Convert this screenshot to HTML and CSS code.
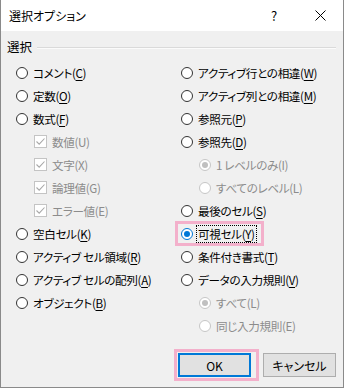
FILE: index.html
```html
<!DOCTYPE html>
<html lang="ja">
<head>
<meta charset="utf-8">
<title>選択オプション</title>
<link rel="stylesheet" href="styles.css">
</head>
<body>
<div class="window">
  <div class="titlebar">
    <span class="title">選択オプション</span>
    <span class="tb-btn help">?</span>
    <span class="tb-btn close"><svg width="11" height="11" viewBox="0 0 11 11"><path d="M0.5 0.5 L10.5 10.5 M10.5 0.5 L0.5 10.5" stroke="#000" stroke-width="1" fill="none"/></svg></span>
  </div>
  <div class="content">
    <div class="group-head"><span class="group-label">選択</span><span class="rule"></span></div>
    <div class="columns">
      <div class="col">
        <div class="opt"><span class="radio"></span><span class="lbl">コメント(<u>C</u>)</span></div>
        <div class="opt"><span class="radio"></span><span class="lbl">定数(<u>O</u>)</span></div>
        <div class="opt"><span class="radio"></span><span class="lbl">数式(<u>F</u>)</span></div>
        <div class="opt sub dis"><span class="check"><svg width="11" height="11" viewBox="0 0 11 11"><path d="M1.5 5.5 L4.2 8.2 L9.5 2.5" stroke="#a8a8a8" stroke-width="1.1" fill="none"/></svg></span><span class="lbl">数値(U)</span></div>
        <div class="opt sub dis"><span class="check"><svg width="11" height="11" viewBox="0 0 11 11"><path d="M1.5 5.5 L4.2 8.2 L9.5 2.5" stroke="#a8a8a8" stroke-width="1.1" fill="none"/></svg></span><span class="lbl">文字(X)</span></div>
        <div class="opt sub dis"><span class="check"><svg width="11" height="11" viewBox="0 0 11 11"><path d="M1.5 5.5 L4.2 8.2 L9.5 2.5" stroke="#a8a8a8" stroke-width="1.1" fill="none"/></svg></span><span class="lbl">論理値(G)</span></div>
        <div class="opt sub dis"><span class="check"><svg width="11" height="11" viewBox="0 0 11 11"><path d="M1.5 5.5 L4.2 8.2 L9.5 2.5" stroke="#a8a8a8" stroke-width="1.1" fill="none"/></svg></span><span class="lbl">エラー値(E)</span></div>
        <div class="opt"><span class="radio"></span><span class="lbl">空白セル(<u>K</u>)</span></div>
        <div class="opt"><span class="radio"></span><span class="lbl">アクティブ セル領域(<u>R</u>)</span></div>
        <div class="opt"><span class="radio"></span><span class="lbl">アクティブ セルの配列(<u>A</u>)</span></div>
        <div class="opt"><span class="radio"></span><span class="lbl">オブジェクト(<u>B</u>)</span></div>
      </div>
      <div class="col">
        <div class="opt"><span class="radio"></span><span class="lbl">アクティブ行との相違(<u>W</u>)</span></div>
        <div class="opt"><span class="radio"></span><span class="lbl">アクティブ列との相違(<u>M</u>)</span></div>
        <div class="opt"><span class="radio"></span><span class="lbl">参照元(<u>P</u>)</span></div>
        <div class="opt"><span class="radio"></span><span class="lbl">参照先(<u>D</u>)</span></div>
        <div class="opt sub dis"><span class="radio on"></span><span class="lbl">1 レベルのみ(I)</span></div>
        <div class="opt sub dis"><span class="radio"></span><span class="lbl">すべてのレベル(L)</span></div>
        <div class="opt"><span class="radio"></span><span class="lbl">最後のセル(<u>S</u>)</span></div>
        <div class="opt marked"><span class="radio on"></span><span class="lbl focus">可視セル(<u>Y</u>)</span></div>
        <div class="opt"><span class="radio"></span><span class="lbl">条件付き書式(<u>T</u>)</span></div>
        <div class="opt"><span class="radio"></span><span class="lbl">データの入力規則(<u>V</u>)</span></div>
        <div class="opt sub dis"><span class="radio on"></span><span class="lbl">すべて(L)</span></div>
        <div class="opt sub dis"><span class="radio"></span><span class="lbl">同じ入力規則(E)</span></div>
      </div>
    </div>
    <div class="footer">
      <button class="btn ok">OK</button>
      <button class="btn">キャンセル</button>
    </div>
  </div>
</div>
</body>
</html>
```

FILE: styles.css
```css
html, body {
  margin: 0;
  padding: 0;
}
body {
  font-family: "Noto Sans CJK JP", "Noto Sans", sans-serif;
  font-size: 12px;
  font-feature-settings: "palt";
  color: #000;
  background: #f0f0f0;
}
.window {
  width: 344px;
  height: 388px;
  box-sizing: border-box;
  border: 1px solid #8a8a8a;
  border-top: none;
  background: #f0f0f0;
  display: flex;
  flex-direction: column;
}
.titlebar {
  height: 31px;
  background: #fff;
  display: flex;
  align-items: center;
  padding-left: 8px;
}
.title {
  flex: 1;
  line-height: 31px;
}
.tb-btn {
  width: 46px;
  height: 31px;
  display: flex;
  align-items: center;
  justify-content: center;
}
.help {
  font-size: 13px;
  padding-left: 3px;
}
.content {
  flex: 1;
  display: flex;
  flex-direction: column;
}
.group-head {
  margin-top: 6px;
  height: 20px;
  display: flex;
  align-items: center;
  padding-left: 6px;
  padding-right: 7px;
}
.group-label {
  line-height: 20px;
  font-size: 12.5px;
}
.rule {
  flex: 1;
  margin-left: 5px;
  border-top: 1px solid #dadada;
  border-bottom: 1px solid #fbfbfb;
  margin-top: 1px;
}
.columns {
  margin-top: 4px;
  padding-left: 15px;
  display: grid;
  grid-template-columns: 165px 1fr;
}
.opt {
  height: 23px;
  display: flex;
  align-items: center;
  position: relative;
}
.opt.sub {
  padding-left: 18px;
}
.opt.dis .lbl {
  color: #8c8c8c;
}
.lbl {
  white-space: nowrap;
  line-height: 16px;
  font-size: 11.6px;
  letter-spacing: -0.35px;
}
.lbl u {
  text-underline-offset: 2px;
}
.radio {
  width: 12px;
  height: 12px;
  box-sizing: border-box;
  border: 1px solid #333;
  border-radius: 50%;
  background: #fff;
  margin-right: 5px;
  flex-shrink: 0;
  display: flex;
  align-items: center;
  justify-content: center;
}
.radio.on::after {
  content: "";
  width: 6px;
  height: 6px;
  border-radius: 50%;
  background: #0078d7;
}
.radio.on {
  border-color: #0078d7;
}
.dis .radio {
  border-color: #c6c6c6;
}
.dis .radio.on::after {
  background: #c0c0c0;
}
.check {
  width: 13px;
  height: 13px;
  box-sizing: border-box;
  border: 1px solid #c4c4c4;
  background: #fff;
  margin-right: 5px;
  flex-shrink: 0;
  display: flex;
  align-items: center;
  justify-content: center;
}
.check svg {
  display: block;
}
.focus {
  border: 1px dotted #000;
  padding: 0 1px;
  margin-left: -2px;
}
.marked::before {
  content: "";
  position: absolute;
  left: -6px;
  top: -1px;
  width: 89px;
  height: 25px;
  box-sizing: border-box;
  border: 3px solid #f3b0cb;
  pointer-events: none;
}
.footer {
  margin-top: 16px;
  display: flex;
  justify-content: flex-end;
  gap: 12px;
  padding-right: 7px;
}
.btn {
  width: 73px;
  height: 24px;
  box-sizing: border-box;
  border: 1px solid #adadad;
  background: #e1e1e1;
  font-family: inherit;
  font-size: 12px;
  font-feature-settings: "palt";
  color: #000;
  padding: 0;
  margin: 0;
  position: relative;
}
.btn.ok {
  border: 2px solid #0078d7;
}
.btn.ok::before {
  content: "";
  position: absolute;
  left: -6px;
  top: -6px;
  width: 85px;
  height: 32px;
  box-sizing: border-box;
  border: 3px solid #f3b0cb;
}
```
